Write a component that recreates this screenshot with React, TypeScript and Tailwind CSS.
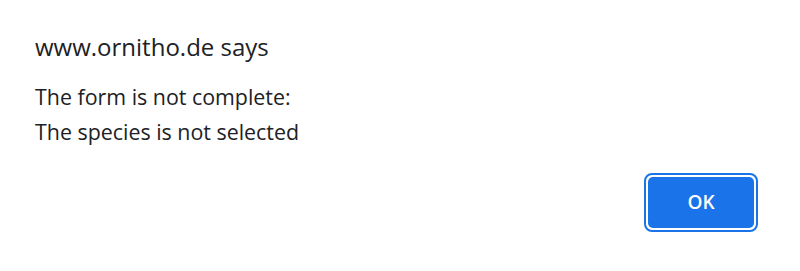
export default function App() {
  return (
    <div
      className="w-[800px] h-[271px] bg-white text-[#202124] flex flex-col pl-[35px] pr-[42px]"
      style={{ fontFamily: '"Open Sans", "Noto Sans", sans-serif' }}
    >
      {/* Titel */}
      <h1 className="text-[24px] leading-[32px] mt-[31px]">www.ornitho.de says</h1>

      {/* Meldung */}
      <div className="mt-[16px] text-[21.4px] leading-[35px]">
        <p>The form is not complete:</p>
        <p>The species is not selected</p>
      </div>

      {/* Aktionen */}
      <div className="flex justify-end mt-[24px]">
        <button className="w-[114px] h-[59px] rounded-[8px] border-2 border-[#1a73e8] p-[2px] bg-white">
          <span className="flex w-full h-full items-center justify-center rounded-[5px] bg-[#1a73e8] text-white text-[19px] font-semibold">
            OK
          </span>
        </button>
      </div>
    </div>
  );
}
